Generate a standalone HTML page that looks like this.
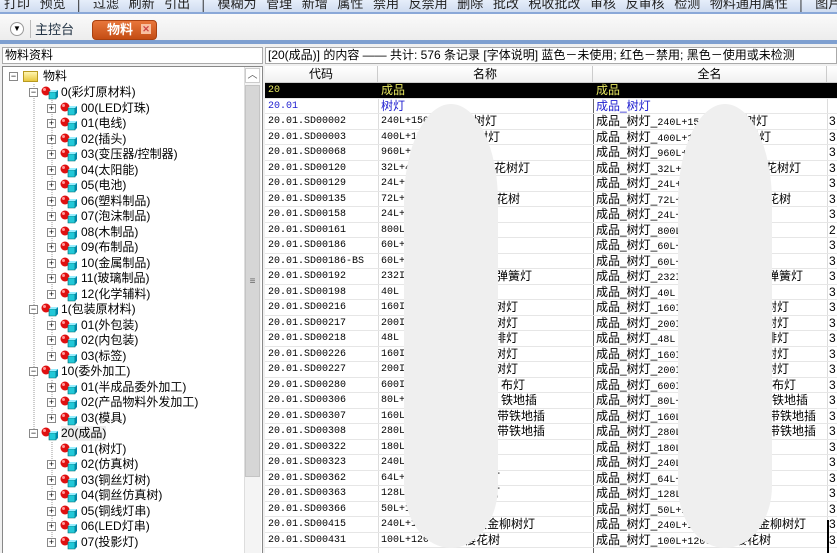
<!DOCTYPE html>
<html><head><meta charset="utf-8"><style>
*{margin:0;padding:0;box-sizing:border-box}
body{width:837px;height:553px;overflow:hidden;background:#fff;position:relative;font-family:"Liberation Sans","Noto Sans CJK SC",sans-serif;font-size:12px;color:#000}
.a{position:absolute}
#tb{left:0;top:0;width:837px;height:14px;background:linear-gradient(#e6eefa,#cfdcf0);border-bottom:2px solid #8aa8d8;overflow:hidden}
#tb div{position:absolute;top:-7px;left:4px;white-space:nowrap;font-size:13px;color:#222;word-spacing:6px}
#tabs{left:0;top:14px;width:837px;height:27px;background:linear-gradient(#fafafa,#ececec)}
#bl{left:0;top:40px;width:837px;height:4px;background:#7e9fd0}
.m{font-family:"Liberation Mono","Noto Sans CJK SC",monospace;font-size:10px}
.r{position:absolute;left:265px;width:572px;height:15.5px;border-bottom:1px solid #e6e6e6;line-height:15px;white-space:nowrap}
.c1{position:absolute;left:3px}.c2{position:absolute;left:116px}.c3{position:absolute;left:331px}.c4{position:absolute;left:564px}
.s{position:absolute;top:0}
.t{position:absolute;height:15.5px;line-height:15px;white-space:nowrap;font-size:12px}
.pb{position:absolute;width:9px;height:9px;border:1px solid #888;background:#fff;font-size:9px;line-height:7px;text-align:center;color:#000}
</style></head><body>
<svg width="0" height="0" style="position:absolute"><defs><g id="ic"><circle cx="5" cy="5" r="4.5" fill="#e01010"/><circle cx="3.5" cy="3.5" r="1.5" fill="#f99"/><path d="M8 6h7v7h-7z" fill="#22c8d8" stroke="#066" stroke-width=".6"/><path d="M8 6l2-2h7l-2 2z" fill="#9ef"/><path d="M15 6l2-2v7l-2 2z" fill="#08a"/></g></defs></svg>
<div id="tb" class="a"><div>打印 预览 │ 过滤 刷新 引出 │ 模糊为 管理 新增 属性 禁用 反禁用 删除 批改 税收批改 审核 反审核 检测 物料通用属性 │ 图片 附件 条形码</div></div>
<div id="tabs" class="a">
 <div class="a" style="left:10px;top:8px;width:14px;height:14px;border-radius:50%;border:1px solid #999;background:#fff;font-size:8px;text-align:center;line-height:12px">▼</div>
 <div class="a" style="left:30px;top:6px;width:1px;height:18px;background:#bbb"></div>
 <div class="a" style="left:35px;top:5px;font-size:13px;color:#234">主控台</div>
 <div class="a" style="left:92px;top:6px;width:65px;height:20px;border-radius:4px;background:linear-gradient(#e8763a,#c44d14);border:1px solid #a84010;color:#fff;font-weight:bold;font-size:13px;padding-left:14px;line-height:18px">物料<span style="position:absolute;left:48px;top:3px;width:10px;height:10px;background:#f8c0a0;color:#c44;font-size:9px;line-height:10px;text-align:center">✕</span></div>
</div>
<div id="bl" class="a"></div>
<div class="a" style="left:0;top:44px;width:837px;height:509px;background:#f0f0f0"></div>
<div class="a" style="left:2px;top:47px;width:261px;height:17px;background:#fff;border:1px solid #aaa;line-height:15px;padding-left:2px">物料资料</div>
<div class="a" style="left:2px;top:66px;width:261px;height:487px;background:#fff;border:1px solid #888;border-bottom:none"></div>
<div class="a" style="left:244px;top:67px;width:17px;height:486px;background:#f4f4f4;border-left:1px solid #ddd"></div>
<div class="a" style="left:245px;top:68px;width:15px;height:15px;background:#fff;border:1px solid #ccc;text-align:center;font-size:10px;line-height:13px;color:#555">︿</div>
<div class="a" style="left:245px;top:85px;width:15px;height:392px;background:#d6d6d6;border:1px solid #c4c4c4;text-align:center;line-height:392px;color:#666;font-size:10px">≡</div>
<svg class="a" style="left:0;top:0" width="262" height="553">
<g stroke="#999" stroke-dasharray="1 1" stroke-width="1">
<line x1="34" y1="84" x2="34" y2="434"/><line x1="52" y1="100" x2="52" y2="294"/><line x1="52" y1="318" x2="52" y2="356"/><line x1="52" y1="380" x2="52" y2="418"/><line x1="52" y1="442" x2="52" y2="548"/>
</g>
</svg>
<div class="t" style="left:0;top:69px"><span class="pb" style="left:9px;top:3px">−</span><span class="a" style="left:23px;top:2px;width:15px;height:11px;background:linear-gradient(#fff6b0,#e8c840);border:1px solid #b89a20"></span><span class="a" style="left:43px">物料</span></div>
<div class="t" style="left:0;top:85px"><span class="pb" style="left:29px;top:3px">−</span><svg class="a" style="left:41px;top:1px" width="18" height="14"><use href="#ic"/></svg><span class="a" style="left:61px">0(彩灯原材料)</span></div>
<div class="t" style="left:0;top:100.5px"><span class="pb" style="left:47px;top:3px">+</span><svg class="a" style="left:60px;top:1px" width="18" height="14"><use href="#ic"/></svg><span class="a" style="left:81px">00(LED灯珠)</span></div>
<div class="t" style="left:0;top:116px"><span class="pb" style="left:47px;top:3px">+</span><svg class="a" style="left:60px;top:1px" width="18" height="14"><use href="#ic"/></svg><span class="a" style="left:81px">01(电线)</span></div>
<div class="t" style="left:0;top:131.5px"><span class="pb" style="left:47px;top:3px">+</span><svg class="a" style="left:60px;top:1px" width="18" height="14"><use href="#ic"/></svg><span class="a" style="left:81px">02(插头)</span></div>
<div class="t" style="left:0;top:147px"><span class="pb" style="left:47px;top:3px">+</span><svg class="a" style="left:60px;top:1px" width="18" height="14"><use href="#ic"/></svg><span class="a" style="left:81px">03(变压器/控制器)</span></div>
<div class="t" style="left:0;top:162.5px"><span class="pb" style="left:47px;top:3px">+</span><svg class="a" style="left:60px;top:1px" width="18" height="14"><use href="#ic"/></svg><span class="a" style="left:81px">04(太阳能)</span></div>
<div class="t" style="left:0;top:178px"><span class="pb" style="left:47px;top:3px">+</span><svg class="a" style="left:60px;top:1px" width="18" height="14"><use href="#ic"/></svg><span class="a" style="left:81px">05(电池)</span></div>
<div class="t" style="left:0;top:193.5px"><span class="pb" style="left:47px;top:3px">+</span><svg class="a" style="left:60px;top:1px" width="18" height="14"><use href="#ic"/></svg><span class="a" style="left:81px">06(塑料制品)</span></div>
<div class="t" style="left:0;top:209px"><span class="pb" style="left:47px;top:3px">+</span><svg class="a" style="left:60px;top:1px" width="18" height="14"><use href="#ic"/></svg><span class="a" style="left:81px">07(泡沫制品)</span></div>
<div class="t" style="left:0;top:224.5px"><span class="pb" style="left:47px;top:3px">+</span><svg class="a" style="left:60px;top:1px" width="18" height="14"><use href="#ic"/></svg><span class="a" style="left:81px">08(木制品)</span></div>
<div class="t" style="left:0;top:240px"><span class="pb" style="left:47px;top:3px">+</span><svg class="a" style="left:60px;top:1px" width="18" height="14"><use href="#ic"/></svg><span class="a" style="left:81px">09(布制品)</span></div>
<div class="t" style="left:0;top:255.5px"><span class="pb" style="left:47px;top:3px">+</span><svg class="a" style="left:60px;top:1px" width="18" height="14"><use href="#ic"/></svg><span class="a" style="left:81px">10(金属制品)</span></div>
<div class="t" style="left:0;top:271px"><span class="pb" style="left:47px;top:3px">+</span><svg class="a" style="left:60px;top:1px" width="18" height="14"><use href="#ic"/></svg><span class="a" style="left:81px">11(玻璃制品)</span></div>
<div class="t" style="left:0;top:286.5px"><span class="pb" style="left:47px;top:3px">+</span><svg class="a" style="left:60px;top:1px" width="18" height="14"><use href="#ic"/></svg><span class="a" style="left:81px">12(化学辅料)</span></div>
<div class="t" style="left:0;top:302px"><span class="pb" style="left:29px;top:3px">−</span><svg class="a" style="left:41px;top:1px" width="18" height="14"><use href="#ic"/></svg><span class="a" style="left:61px">1(包装原材料)</span></div>
<div class="t" style="left:0;top:317.5px"><span class="pb" style="left:47px;top:3px">+</span><svg class="a" style="left:60px;top:1px" width="18" height="14"><use href="#ic"/></svg><span class="a" style="left:81px">01(外包装)</span></div>
<div class="t" style="left:0;top:333px"><span class="pb" style="left:47px;top:3px">+</span><svg class="a" style="left:60px;top:1px" width="18" height="14"><use href="#ic"/></svg><span class="a" style="left:81px">02(内包装)</span></div>
<div class="t" style="left:0;top:348.5px"><span class="pb" style="left:47px;top:3px">+</span><svg class="a" style="left:60px;top:1px" width="18" height="14"><use href="#ic"/></svg><span class="a" style="left:81px">03(标签)</span></div>
<div class="t" style="left:0;top:364px"><span class="pb" style="left:29px;top:3px">−</span><svg class="a" style="left:41px;top:1px" width="18" height="14"><use href="#ic"/></svg><span class="a" style="left:61px">10(委外加工)</span></div>
<div class="t" style="left:0;top:379.5px"><span class="pb" style="left:47px;top:3px">+</span><svg class="a" style="left:60px;top:1px" width="18" height="14"><use href="#ic"/></svg><span class="a" style="left:81px">01(半成品委外加工)</span></div>
<div class="t" style="left:0;top:395px"><span class="pb" style="left:47px;top:3px">+</span><svg class="a" style="left:60px;top:1px" width="18" height="14"><use href="#ic"/></svg><span class="a" style="left:81px">02(产品物料外发加工)</span></div>
<div class="t" style="left:0;top:410.5px"><span class="pb" style="left:47px;top:3px">+</span><svg class="a" style="left:60px;top:1px" width="18" height="14"><use href="#ic"/></svg><span class="a" style="left:81px">03(模具)</span></div>
<div class="t" style="left:0;top:426px"><span class="pb" style="left:29px;top:3px">−</span><svg class="a" style="left:41px;top:1px" width="18" height="14"><use href="#ic"/></svg><span class="a" style="left:61px;background:#eee">20(成品)</span></div>
<div class="t" style="left:0;top:441.5px"><svg class="a" style="left:60px;top:1px" width="18" height="14"><use href="#ic"/></svg><span class="a" style="left:81px">01(树灯)</span></div>
<div class="t" style="left:0;top:457px"><span class="pb" style="left:47px;top:3px">+</span><svg class="a" style="left:60px;top:1px" width="18" height="14"><use href="#ic"/></svg><span class="a" style="left:81px">02(仿真树)</span></div>
<div class="t" style="left:0;top:472.5px"><span class="pb" style="left:47px;top:3px">+</span><svg class="a" style="left:60px;top:1px" width="18" height="14"><use href="#ic"/></svg><span class="a" style="left:81px">03(铜丝灯树)</span></div>
<div class="t" style="left:0;top:488px"><span class="pb" style="left:47px;top:3px">+</span><svg class="a" style="left:60px;top:1px" width="18" height="14"><use href="#ic"/></svg><span class="a" style="left:81px">04(铜丝仿真树)</span></div>
<div class="t" style="left:0;top:503.5px"><span class="pb" style="left:47px;top:3px">+</span><svg class="a" style="left:60px;top:1px" width="18" height="14"><use href="#ic"/></svg><span class="a" style="left:81px">05(铜线灯串)</span></div>
<div class="t" style="left:0;top:519px"><span class="pb" style="left:47px;top:3px">+</span><svg class="a" style="left:60px;top:1px" width="18" height="14"><use href="#ic"/></svg><span class="a" style="left:81px">06(LED灯串)</span></div>
<div class="t" style="left:0;top:534.5px"><span class="pb" style="left:47px;top:3px">+</span><svg class="a" style="left:60px;top:1px" width="18" height="14"><use href="#ic"/></svg><span class="a" style="left:81px">07(投影灯)</span></div>
<div class="a" style="left:265px;top:47px;width:572px;height:17px;background:#fff;border:1px solid #aaa;line-height:15px;padding-left:2px;white-space:nowrap;font-size:12px">[20(成品)] 的内容 —— 共计: 576 条记录 [字体说明] 蓝色－未使用; 红色－禁用; 黑色－使用或未检测</div>
<div class="a" style="left:265px;top:66px;width:572px;height:487px;background:#fff"></div>
<div class="a" style="left:265px;top:66px;width:572px;height:17px;background:linear-gradient(#fff,#f0f0f0);border-bottom:1px solid #ccc;line-height:16px">
<span class="a" style="left:0;width:113px;text-align:center;border-right:1px solid #ccc">代码</span><span class="a" style="left:113px;width:215px;text-align:center;border-right:1px solid #ccc">名称</span><span class="a" style="left:328px;width:234px;text-align:center;border-right:1px solid #ccc">全名</span></div>
<div class="a" style="left:378px;top:83px;width:1px;height:470px;background:#ddd"></div>
<div class="a" style="left:593px;top:83px;width:1px;height:470px;background:#666"></div>
<div class="a" style="left:827px;top:83px;width:1px;height:470px;background:#ddd"></div>
<div class="r" style="top:83px;background:#000;color:#e8e860"><span class="c1 m">20</span><span class="c2">成品</span><span class="c3">成品</span></div>
<div class="r" style="top:98.5px;color:#2020d0"><span class="c1 m">20.01</span><span class="c2">树灯</span><span class="c3">成品_树灯</span></div>
<div class="r" style="top:114px"><span class="c1 m">20.01.SD00002</span><span class="c2 m">240L+150C</span><span class="s" style="right:340px">柳树灯</span><span class="c3">成品_树灯_<span class="m">240L+150C</span></span><span class="s" style="right:69px">柳树灯</span><span class="c4">3</span></div>
<div class="r" style="top:129.5px"><span class="c1 m">20.01.SD00003</span><span class="c2 m">400L+170</span><span class="s" style="right:337px">色柳树灯</span><span class="c3">成品_树灯_<span class="m">400L+170</span></span><span class="s" style="right:66px">色柳树灯</span><span class="c4">3</span></div>
<div class="r" style="top:145px"><span class="c1 m">20.01.SD00068</span><span class="c2 m">960L+25</span><span class="s" style="right:350px">花树</span><span class="c3">成品_树灯_<span class="m">960L+25</span></span><span class="s" style="right:79px">花树</span><span class="c4">3</span></div>
<div class="r" style="top:160.5px"><span class="c1 m">20.01.SD00120</span><span class="c2 m">32L+45</span><span class="s" style="right:307px">瑰花树灯</span><span class="c3">成品_树灯_<span class="m">32L+45</span></span><span class="s" style="right:36px">瑰花树灯</span><span class="c4">3</span></div>
<div class="r" style="top:176px"><span class="c1 m">20.01.SD00129</span><span class="c2 m">24L+36</span><span class="c3">成品_树灯_<span class="m">24L+36</span></span><span class="c4">3</span></div>
<div class="r" style="top:191.5px"><span class="c1 m">20.01.SD00135</span><span class="c2 m">72L+1</span><span class="s" style="right:317px">瑰花树</span><span class="c3">成品_树灯_<span class="m">72L+1</span></span><span class="s" style="right:46px">瑰花树</span><span class="c4">3</span></div>
<div class="r" style="top:207px"><span class="c1 m">20.01.SD00158</span><span class="c2 m">24L+6</span><span class="c3">成品_树灯_<span class="m">24L+6</span></span><span class="c4">3</span></div>
<div class="r" style="top:222.5px"><span class="c1 m">20.01.SD00161</span><span class="c2 m">800L</span><span class="c3">成品_树灯_<span class="m">800L</span></span><span class="c4">2</span></div>
<div class="r" style="top:238px"><span class="c1 m">20.01.SD00186</span><span class="c2 m">60L+</span><span class="c3">成品_树灯_<span class="m">60L+</span></span><span class="c4">3</span></div>
<div class="r" style="top:253.5px"><span class="c1 m">20.01.SD00186-BS</span><span class="c2 m">60L+</span><span class="c3">成品_树灯_<span class="m">60L+</span></span><span class="c4">3</span></div>
<div class="r" style="top:269px"><span class="c1 m">20.01.SD00192</span><span class="c2 m">232I</span><span class="s" style="right:305px">弹簧灯</span><span class="c3">成品_树灯_<span class="m">232I</span></span><span class="s" style="right:34px">弹簧灯</span><span class="c4">3</span></div>
<div class="r" style="top:284.5px"><span class="c1 m">20.01.SD00198</span><span class="c2 m">40L</span><span class="c3">成品_树灯_<span class="m">40L</span></span><span class="c4">3</span></div>
<div class="r" style="top:300px"><span class="c1 m">20.01.SD00216</span><span class="c2 m">160I</span><span class="s" style="right:319px">树灯</span><span class="c3">成品_树灯_<span class="m">160I</span></span><span class="s" style="right:48px">树灯</span><span class="c4">3</span></div>
<div class="r" style="top:315.5px"><span class="c1 m">20.01.SD00217</span><span class="c2 m">200I</span><span class="s" style="right:319px">树灯</span><span class="c3">成品_树灯_<span class="m">200I</span></span><span class="s" style="right:48px">树灯</span><span class="c4">3</span></div>
<div class="r" style="top:331px"><span class="c1 m">20.01.SD00218</span><span class="c2 m">48L</span><span class="s" style="right:319px">排灯</span><span class="c3">成品_树灯_<span class="m">48L</span></span><span class="s" style="right:48px">排灯</span><span class="c4">3</span></div>
<div class="r" style="top:346.5px"><span class="c1 m">20.01.SD00226</span><span class="c2 m">160I</span><span class="s" style="right:319px">树灯</span><span class="c3">成品_树灯_<span class="m">160I</span></span><span class="s" style="right:48px">树灯</span><span class="c4">3</span></div>
<div class="r" style="top:362px"><span class="c1 m">20.01.SD00227</span><span class="c2 m">200I</span><span class="s" style="right:319px">树灯</span><span class="c3">成品_树灯_<span class="m">200I</span></span><span class="s" style="right:48px">树灯</span><span class="c4">3</span></div>
<div class="r" style="top:377.5px"><span class="c1 m">20.01.SD00280</span><span class="c2 m">600I</span><span class="s" style="right:312px">布灯</span><span class="c3">成品_树灯_<span class="m">600I</span></span><span class="s" style="right:41px">布灯</span><span class="c4">3</span></div>
<div class="r" style="top:393px"><span class="c1 m">20.01.SD00306</span><span class="c2 m">80L+</span><span class="s" style="right:300px">铁地插</span><span class="c3">成品_树灯_<span class="m">80L+</span></span><span class="s" style="right:29px">铁地插</span><span class="c4">3</span></div>
<div class="r" style="top:408.5px"><span class="c1 m">20.01.SD00307</span><span class="c2 m">160L</span><span class="s" style="right:292px">带铁地插</span><span class="c3">成品_树灯_<span class="m">160L</span></span><span class="s" style="right:21px">带铁地插</span><span class="c4">3</span></div>
<div class="r" style="top:424px"><span class="c1 m">20.01.SD00308</span><span class="c2 m">280L</span><span class="s" style="right:292px">带铁地插</span><span class="c3">成品_树灯_<span class="m">280L</span></span><span class="s" style="right:21px">带铁地插</span><span class="c4">3</span></div>
<div class="r" style="top:439.5px"><span class="c1 m">20.01.SD00322</span><span class="c2 m">180L</span><span class="s" style="right:340px">树</span><span class="c3">成品_树灯_<span class="m">180L</span></span><span class="s" style="right:69px">树</span><span class="c4">3</span></div>
<div class="r" style="top:455px"><span class="c1 m">20.01.SD00323</span><span class="c2 m">240L</span><span class="s" style="right:340px">树</span><span class="c3">成品_树灯_<span class="m">240L</span></span><span class="s" style="right:69px">树</span><span class="c4">3</span></div>
<div class="r" style="top:470.5px"><span class="c1 m">20.01.SD00362</span><span class="c2 m">64L+45</span><span class="s" style="right:337px">灯</span><span class="c3">成品_树灯_<span class="m">64L+45</span></span><span class="s" style="right:66px">灯</span><span class="c4">3</span></div>
<div class="r" style="top:486px"><span class="c1 m">20.01.SD00363</span><span class="c2 m">128L+8</span><span class="s" style="right:337px">树灯</span><span class="c3">成品_树灯_<span class="m">128L+8</span></span><span class="s" style="right:66px">树灯</span><span class="c4">3</span></div>
<div class="r" style="top:501.5px"><span class="c1 m">20.01.SD00366</span><span class="c2 m">50L+110</span><span class="s" style="right:345px">树</span><span class="c3">成品_树灯_<span class="m">50L+110</span></span><span class="s" style="right:74px">树</span><span class="c4">3</span></div>
<div class="r" style="top:517px"><span class="c1 m">20.01.SD00415</span><span class="c2 m">240L+150</span><span class="s" style="right:302px">槟金柳树灯</span><span class="c3">成品_树灯_<span class="m">240L+150</span></span><span class="s" style="right:31px">槟金柳树灯</span><span class="c4">3</span></div>
<div class="r" style="top:532.5px"><span class="c1 m">20.01.SD00431</span><span class="c2 m">100L+120CM</span><span class="s" style="right:337px">樱花树</span><span class="c3">成品_树灯_<span class="m">100L+120CM</span></span><span class="s" style="right:66px">樱花树</span><span class="c4">3</span></div>
<div class="a" style="left:827px;top:520px;width:2px;height:33px;background:#000"></div>
<div class="a" style="left:404px;top:104px;width:94px;height:444px;background:#efefef;border-radius:50% 50% 50% 50% / 22% 22% 14% 14%"></div>
<div class="a" style="left:678px;top:104px;width:94px;height:444px;background:#efefef;border-radius:50% 50% 50% 50% / 22% 22% 14% 14%"></div>
</body></html>
